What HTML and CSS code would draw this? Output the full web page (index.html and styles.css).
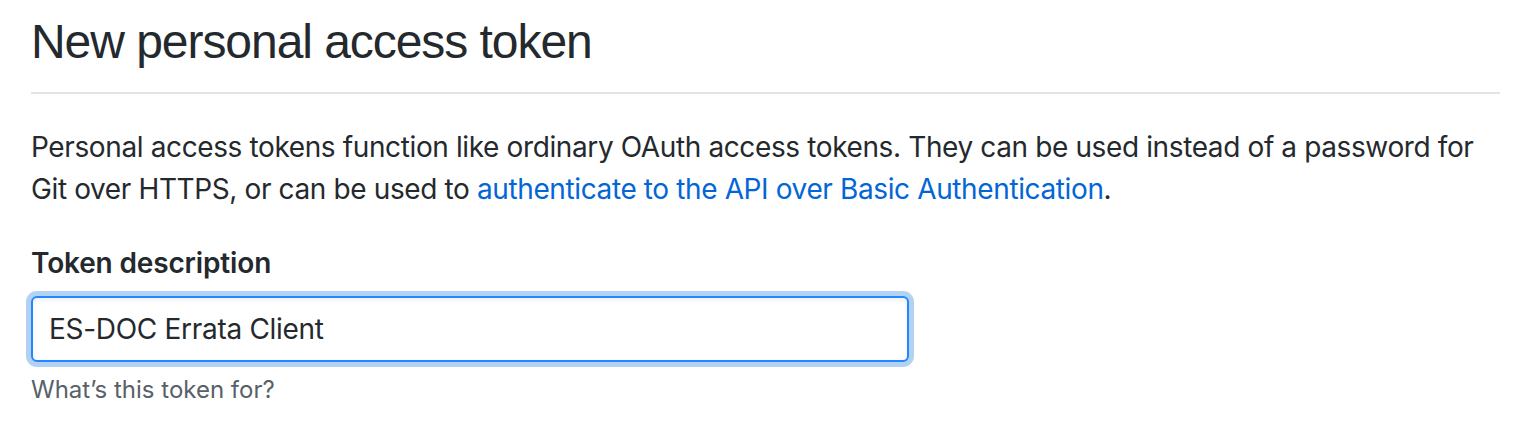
FILE: index.html
```html
<!DOCTYPE html>
<html lang="en">
<head>
<meta charset="utf-8">
<title>New personal access token</title>
<link rel="stylesheet" href="styles.css">
</head>
<body>
<main class="page">
  <div class="subhead">
    <h2 class="subhead-heading">New personal access token</h2>
  </div>
  <p class="intro">Personal access tokens function like ordinary OAuth access tokens. They can be used instead of a password for Git over HTTPS, or can be used to <a class="link" href="#">authenticate to the API over Basic Authentication</a>.</p>
  <div class="form-group">
    <label class="form-label" for="desc">Token description</label>
    <div class="input-wrap">
      <input id="desc" class="form-control" type="text" value="ES-DOC Errata Client">
    </div>
    <p class="note">What’s this token for?</p>
  </div>
</main>
</body>
</html>
```
FILE: styles.css
```css
html, body {
  margin: 0;
  padding: 0;
  background: #fff;
}
body {
  font-family: Inter, "Noto Sans", "Liberation Sans", sans-serif;
  color: #24292e;
}
.page {
  padding: 12px 28px 0 31px;
}
.subhead {
  border-bottom: 2px solid #e1e4e8;
  padding-bottom: 20px;
}
.subhead-heading {
  margin: 0;
  font-family: "Liberation Sans", Arial, sans-serif;
  font-weight: 400;
  font-size: 48px;
  line-height: 60px;
  letter-spacing: -1.05px;
  color: #24292e;
}
.intro {
  margin: 32px 0 0;
  font-size: 28px;
  line-height: 42px;
  letter-spacing: -0.38px;
}
.link {
  color: #0366d6;
  text-decoration: none;
}
.form-group {
  margin-top: 32px;
}
.form-label {
  display: block;
  font-size: 28px;
  line-height: 42px;
  font-weight: 600;
  letter-spacing: -0.15px;
}
.input-wrap {
  margin-top: 12px;
}
.form-control {
  box-sizing: border-box;
  display: block;
  width: 878px;
  height: 66px;
  padding: 0 16px;
  border: 2px solid #2188ff;
  border-radius: 6px;
  outline: none;
  box-shadow: inset 0 2px 4px rgba(27, 31, 35, 0.075), 0 0 0 5px rgba(3, 102, 214, 0.3);
  font-family: Inter, "Noto Sans", "Liberation Sans", sans-serif;
  font-size: 28px;
  letter-spacing: -0.3px;
  color: #24292e;
  background: #fff;
}
.note {
  margin: 10px 0 0;
  font-size: 24px;
  line-height: 36px;
  color: #586069;
}
```
